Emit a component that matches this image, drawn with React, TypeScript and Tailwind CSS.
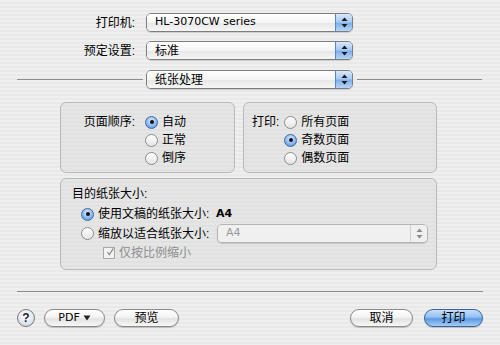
import React from "react";

const stripes =
  "bg-[repeating-linear-gradient(180deg,#efefef_0px,#efefef_2px,#e9e9e9_2px,#e9e9e9_4px)]";
const font = "font-['Liberation_Sans','Noto_Sans_CJK_SC',sans-serif]";
const latin = "font-['DejaVu_Sans',sans-serif] text-[11px]";

function Arrows({ color = "#1a1a1a" }: { color?: string }) {
  return (
    <svg width="7" height="11" viewBox="0 0 7 11">
      <path d="M3.5 0.5 L6.5 4 L0.5 4 Z" fill={color} />
      <path d="M3.5 10.5 L6.5 7 L0.5 7 Z" fill={color} />
    </svg>
  );
}

function Popup({
  children,
  disabled = false,
  width = "w-[207px]",
}: {
  children: React.ReactNode;
  disabled?: boolean;
  width?: string;
}) {
  return (
    <div
      className={`${width} h-[19px] flex rounded-[5px] border ${
        disabled ? "border-[#b4b4b4]" : "border-[#7d7d7d]"
      } overflow-hidden shadow-[0_1px_1px_rgba(0,0,0,0.15)]`}
    >
      <div
        className={`flex-1 flex items-center pl-[8px] text-[12px] ${
          disabled
            ? "text-[#9a9a9a] bg-[#f0f0f0]"
            : "text-black bg-[linear-gradient(180deg,#ffffff_0%,#f4f4f4_50%,#e6e6e6_51%,#f6f6f6_100%)]"
        }`}
      >
        {children}
      </div>
      <div
        className={`w-[17px] flex items-center justify-center border-l ${
          disabled
            ? "border-[#cfcfcf] bg-[#f0f0f0]"
            : "border-[#5b86c2] bg-[linear-gradient(180deg,#d8e8fa_0%,#a9cbf1_45%,#7fb0ea_55%,#b7d6f6_100%)]"
        }`}
      >
        <Arrows color={disabled ? "#8a8a8a" : "#1a1a1a"} />
      </div>
    </div>
  );
}

function Radio({ checked = false }: { checked?: boolean }) {
  return (
    <div
      className={`w-[13px] h-[13px] rounded-full border flex items-center justify-center shrink-0 ${
        checked
          ? "border-[#3e6aa6] bg-[radial-gradient(circle_at_50%_35%,#e3efff_0%,#8ab8ee_55%,#4f89d6_100%)]"
          : "border-[#8b8b8b] bg-[linear-gradient(180deg,#ffffff_0%,#f2f2f2_50%,#e4e4e4_100%)]"
      }`}
    >
      {checked && <div className="w-[4px] h-[4px] rounded-full bg-[#111]" />}
    </div>
  );
}

function RadioItem({ label, checked = false }: { label: string; checked?: boolean }) {
  return (
    <div className="h-[18px] flex items-center gap-[4px]">
      <Radio checked={checked} />
      <span className="text-[12px] leading-none">{label}</span>
    </div>
  );
}

function Button({ children, primary = false, width }: { children: React.ReactNode; primary?: boolean; width: string }) {
  return (
    <div
      className={`${width} h-[18px] rounded-full border flex items-center justify-center text-[12px] shadow-[0_1px_1px_rgba(0,0,0,0.2)] ${
        primary
          ? "border-[#3c6299] bg-[linear-gradient(180deg,#c8defa_0%,#93bff1_45%,#5d9ae4_55%,#a4cdf7_100%)]"
          : "border-[#8a8a8a] bg-[linear-gradient(180deg,#ffffff_0%,#f3f3f3_45%,#e2e2e2_55%,#f8f8f8_100%)]"
      }`}
    >
      {children}
    </div>
  );
}

const groupBg =
  "rounded-[6px] border border-[#b9b9b9] bg-[repeating-linear-gradient(180deg,#e6e6e6_0px,#e6e6e6_2px,#e1e1e1_2px,#e1e1e1_4px)]";

export default function App() {
  return (
    <div className={`w-[500px] h-[345px] ${stripes} ${font} text-black flex flex-col overflow-hidden`}>
      {/* top popups */}
      <div className="pt-[13px] flex flex-col gap-[9px]">
        <div className="flex items-center h-[19px]">
          <div className="w-[137px] text-right text-[12px] pr-[2px]">打印机:</div>
          <div className="ml-[9px]">
            <Popup>
              <span className={latin}>HL-3070CW series</span>
            </Popup>
          </div>
        </div>
        <div className="flex items-center h-[19px]">
          <div className="w-[137px] text-right text-[12px] pr-[2px]">预定设置:</div>
          <div className="ml-[9px]">
            <Popup>标准</Popup>
          </div>
        </div>
        <div className="flex items-center h-[19px] mt-[1px]">
          <div className="ml-[17px] w-[126px] h-px bg-[#8c8c8c]" />
          <div className="ml-[3px]">
            <Popup>纸张处理</Popup>
          </div>
          <div className="ml-[4px] w-[125px] h-px bg-[#8c8c8c]" />
        </div>
      </div>

      {/* group boxes */}
      <div className="mt-[13px] ml-[60px] flex gap-[8px]">
        <div className={`w-[175px] h-[71px] ${groupBg} flex pt-[10px]`}>
          <div className="w-[75px] text-right text-[12px] leading-[18px] pr-[1px]">页面顺序:</div>
          <div className="ml-[9px] flex flex-col">
            <RadioItem label="自动" checked />
            <RadioItem label="正常" />
            <RadioItem label="倒序" />
          </div>
        </div>
        <div className={`w-[194px] h-[71px] ${groupBg} flex pt-[10px]`}>
          <div className="ml-[8px] text-[12px] leading-[18px]">打印:</div>
          <div className="ml-[5px] flex flex-col">
            <RadioItem label="所有页面" />
            <RadioItem label="奇数页面" checked />
            <RadioItem label="偶数页面" />
          </div>
        </div>
      </div>

      <div className={`mt-[5px] ml-[60px] w-[377px] h-[92px] ${groupBg} flex flex-col pt-[6px] pl-[11px]`}>
        <div className="text-[12px] leading-[18px]">目的纸张大小:</div>
        <div className="ml-[9px] mt-[2px] h-[18px] flex items-center">
          <Radio checked />
          <span className="ml-[4px] text-[12px] w-[118px]">使用文稿的纸张大小:</span>
          <span className={`${latin} font-bold`}>A4</span>
        </div>
        <div className="ml-[9px] mt-[1px] h-[19px] flex items-center">
          <Radio />
          <span className="ml-[4px] text-[12px] w-[119px]">缩放以适合纸张大小:</span>
          <Popup disabled width="w-[211px]">
            <span className={latin}>A4</span>
          </Popup>
        </div>
        <div className="ml-[31px] mt-[1px] h-[18px] flex items-center gap-[4px]">
          <div className="w-[12px] h-[12px] border border-[#a8a8a8] bg-[#f2f2f2] flex items-center justify-center">
            <svg width="12" height="12" viewBox="0 0 12 12" className="-mt-[2px] ml-[2px]">
              <path d="M2 6 L5 10 L11 0.5" stroke="#8a8a8a" strokeWidth="1.8" fill="none" />
            </svg>
          </div>
          <span className="text-[12px] text-[#8e8e8e]">仅按比例缩小</span>
        </div>
      </div>

      {/* separator */}
      <div className="mt-[21px] mx-[17px] h-px bg-[#8c8c8c]" />

      {/* buttons */}
      <div className="mt-[17px] px-[17px] flex items-center">
        <div className="w-[18px] h-[18px] rounded-full border border-[#7a7a7a] bg-[radial-gradient(circle_at_50%_35%,#ffffff_0%,#dfe6f3_60%,#b7c3da_100%)] flex items-center justify-center text-[12px] font-bold text-[#222]">
          ?
        </div>
        <div className="ml-[9px]">
          <Button width="w-[61px]">
            <span className="flex items-center gap-[3px]">
              <span className={latin}>PDF</span>
              <svg width="8" height="6" viewBox="0 0 8 6">
                <path d="M0.5 0.5 L7.5 0.5 L4 5.5 Z" fill="#222" />
              </svg>
            </span>
          </Button>
        </div>
        <div className="ml-[9px]">
          <Button width="w-[65px]">预览</Button>
        </div>
        <div className="ml-auto">
          <Button width="w-[63px]">取消</Button>
        </div>
        <div className="ml-[11px]">
          <Button width="w-[59px]" primary>
            打印
          </Button>
        </div>
      </div>
    </div>
  );
}
